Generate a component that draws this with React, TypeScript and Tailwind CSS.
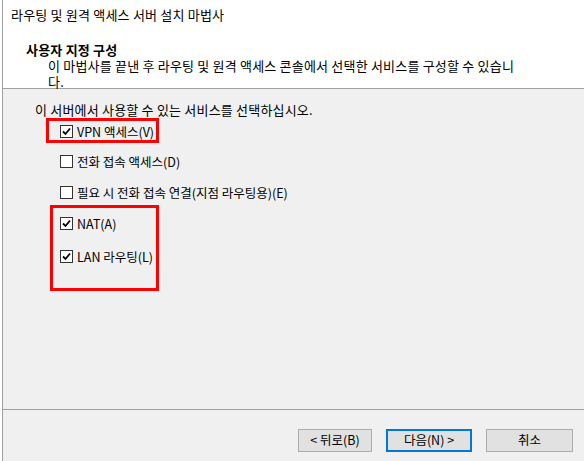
import React from "react";

const font = { fontFamily: '"Noto Sans CJK KR", "Noto Sans", sans-serif' };

function Check({ checked, label }: { checked: boolean; label: string }) {
  return (
    <div className="flex items-center h-[13px]">
      <div className="w-[13px] h-[13px] shrink-0 border border-[#333333] bg-white flex items-center justify-center">
        {checked && (
          <svg width="9" height="9" viewBox="0 0 9 9">
            <path d="M1 4.5 L3.5 7 L8 1.5" stroke="#000" strokeWidth="1.8" fill="none" />
          </svg>
        )}
      </div>
      <span className="ml-[4px] text-[12.5px] leading-[13px] text-black whitespace-nowrap">{label}</span>
    </div>
  );
}

function Btn({ label, primary }: { label: string; primary?: boolean }) {
  return (
    <div
      className={
        "h-[23px] flex items-center justify-center bg-[#e1e1e1] text-[12.5px] text-black " +
        (primary ? "border-2 border-[#0078d7] w-[86px]" : "border border-[#adadad]")
      }
    >
      {label}
    </div>
  );
}

export default function App() {
  return (
    <div className="w-[584px] h-[461px] bg-white pl-[2px] overflow-hidden" style={font}>
      <div className="h-full border-l border-[#a0a0a0] flex flex-col">
        <div className="h-[89px] bg-white border-b border-[#a0a0a0] shrink-0 text-[13px] leading-[16px] tracking-[0.2px] text-black">
          <div className="pl-[8px] pt-[7px]">라우팅 및 원격 액세스 서버 설치 마법사</div>
          <div className="pl-[23px] pt-[19px] font-bold">사용자 지정 구성</div>
          <div className="pl-[45px] pr-[40px] whitespace-nowrap">
            이 마법사를 끝낸 후 라우팅 및 원격 액세스 콘솔에서 선택한 서비스를 구성할 수 있습니
            <br />
            다.
          </div>
        </div>
        <div className="flex-1 bg-[#f0f0f0] flex flex-col">
          <div className="h-[321px] border-b border-[#a0a0a0] relative">
            <div className="pl-[32px] pt-[13px] text-[13px] leading-[16px] tracking-[0.2px] text-black">
              이 서버에서 사용할 수 있는 서비스를 선택하십시오.
            </div>
            <div className="pl-[57px] flex flex-col">
              <div className="mt-[7px]"><Check checked label="VPN 액세스(V)" /></div>
              <div className="mt-[17px]"><Check checked={false} label="전화 접속 액세스(D)" /></div>
              <div className="mt-[18px]"><Check checked={false} label="필요 시 전화 접속 연결(지점 라우팅용)(E)" /></div>
              <div className="mt-[18px]"><Check checked label="NAT(A)" /></div>
              <div className="mt-[20px]"><Check checked label="LAN 라우팅(L)" /></div>
            </div>
            <div className="absolute left-[43px] top-[29px] w-[113px] h-[25px] border-[3px] border-[#ff0000]" />
            <div className="absolute left-[47px] top-[116px] w-[109px] h-[86px] border-[3px] border-[#ff0000]" />
          </div>
          <div className="flex-1 flex items-start pt-[19px] pl-[295px]">
            <div className="w-[74px]"><Btn label="< 뒤로(B)" /></div>
            <div className="ml-[14px]"><Btn label="다음(N) >" primary /></div>
            <div className="ml-[14px] w-[87px]"><Btn label="취소" /></div>
          </div>
        </div>
      </div>
    </div>
  );
}
